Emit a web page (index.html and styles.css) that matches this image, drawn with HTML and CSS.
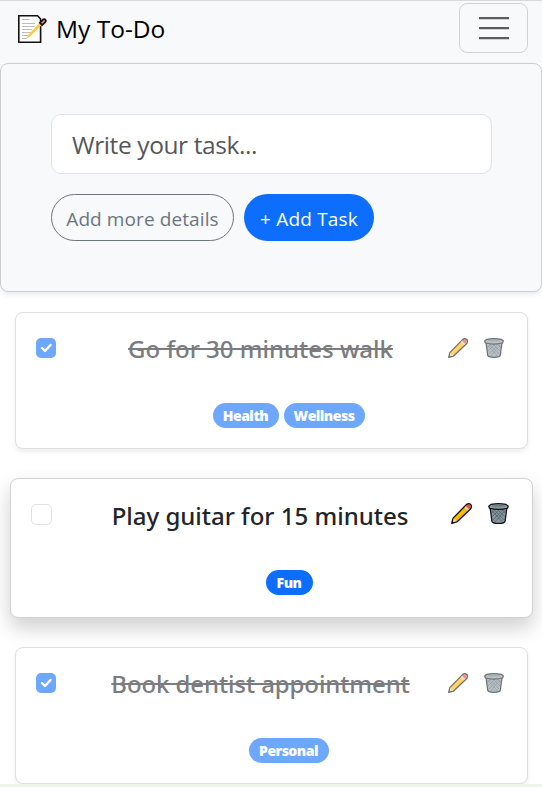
FILE: index.html
```html
<!DOCTYPE html>
<html lang="en">
<head>
<meta charset="utf-8">
<title>My To-Do</title>
<link rel="stylesheet" href="styles.css">
</head>
<body>
<svg class="symbols" width="0" height="0" aria-hidden="true">
  <symbol id="pencil" viewBox="0 0 20 20">
    <path d="M.7 19.3 2 14.4 14.6 1.6Q17 0 18.8 1.5 20.3 3.4 18.5 5.7L5.6 18Z" fill="#ffb900" stroke="#111" stroke-width="1.3" stroke-linejoin="round"/>
    <path d="M1.6 18.4 2.7 14.8 5.2 17.4Z" fill="#e9d3c3"/>
    <path d="m12.8 4.3 3 3 1.4-1.5-3-3Z" fill="#d2d3d8"/>
    <path d="m14.2 2.9 1-1Q17 .9 18.2 2T18 5l-.9.8Z" fill="#f0455d"/>
    <path d="m.7 19.3.6-2.2 1.5 1.5Z" fill="#111"/>
  </symbol>
  <symbol id="bin" viewBox="0 0 20 20">
    <path d="M2 4.500 3.700 17.200Q4 19.400 10 19.400t6.300-2.200L18 4.500Z" fill="#8797a0" stroke="#111" stroke-width="1.200"/>
    <path d="m3.500 7 10 11M5.500 6 15 16M9 6l7 7M13 6l4 4M16.500 7 6.500 18M14.500 6 5 16M11 6l-7 7M7 6l-4 4" fill="none" stroke="#4b5960" stroke-width=".7"/>
    <path d="M2.800 1.300Q10-.1 17.200 1.300L19.300 3 18.600 5Q10 7.200 1.400 5L.7 3Z" fill="#8b9ba2" stroke="#111" stroke-width="1.200" stroke-linejoin="round"/>
    <ellipse cx="10" cy="2.600" rx="6.500" ry="1" fill="#6d7d85"/>
  </symbol>
</svg>
<nav class="navbar">
  <div class="brand">
    <svg class="memo" viewBox="0 0 30 30">
      <path d="M1.800 1.800H20.500L23.600 5V28.200H1.800Z" fill="#fff" stroke="#111" stroke-width="1.600"/>
      <path d="M5 5.500h7.500M5 9.500h13M5 12.500h12.500M5 15.500h10M5 18.500h8.500M5 21.500h7M5 24.500h4.500" stroke="#bcbcbc" stroke-width="1"/>
      <path d="m9.200 24.800 2-4L24.500 7.200l2 2L12.800 22.800Z" fill="#ffc83d"/>
      <path d="m9 25 1.800-4 1.800 1.800Z" fill="#f3c9b5"/>
      <path d="M22.800 8.800 26 5.600Q27.600 4.700 28.500 6T28 8.400L25.200 11Z" fill="#df8b89" stroke="#111" stroke-width="1.700"/>
    </svg>
    <span class="brand-name">My To-Do</span>
  </div>
  <button class="toggler" aria-label="Menu"><svg viewBox="0 0 30 30"><path d="M0 3.200h30M0 13.200h30M0 23.200h30" stroke="#5b5c5d" stroke-width="2.200"/></svg></button>
</nav>
<form class="composer">
  <input class="task-input" placeholder="Write your task...">
  <div class="actions">
    <button type="button" class="btn btn-outline"><span>Add more details</span></button>
    <button type="button" class="btn btn-primary"><span>+ Add Task</span></button>
  </div>
</form>
<main class="tasks">
  <article class="card done">
    <header class="card-head">
      <span class="check checked"><svg viewBox="0 0 20 20"><path d="m6 10 3 3 5.500-6"/></svg></span>
      <h2 class="title">Go for 30 minutes walk</h2>
      <span class="tools"><svg><use href="#pencil"/></svg><svg><use href="#bin"/></svg></span>
    </header>
    <div class="badges"><span class="badge b-health">Health</span><span class="badge b-wellness">Wellness</span></div>
  </article>
  <article class="card raised">
    <header class="card-head">
      <span class="check"></span>
      <h2 class="title">Play guitar for 15 minutes</h2>
      <span class="tools"><svg><use href="#pencil"/></svg><svg><use href="#bin"/></svg></span>
    </header>
    <div class="badges"><span class="badge b-fun">Fun</span></div>
  </article>
  <article class="card done">
    <header class="card-head">
      <span class="check checked"><svg viewBox="0 0 20 20"><path d="m6 10 3 3 5.500-6"/></svg></span>
      <h2 class="title t-dentist">Book dentist appointment</h2>
      <span class="tools"><svg><use href="#pencil"/></svg><svg><use href="#bin"/></svg></span>
    </header>
    <div class="badges"><span class="badge b-personal">Personal</span></div>
  </article>
</main>
<footer class="page-end"></footer>
</body>
</html>
```
FILE: styles.css
```css
* { box-sizing: border-box; }
body {
  margin: 0;
  height: 787px;
  overflow: hidden;
  display: flex;
  flex-direction: column;
  background: #fff;
  color: #212529;
  font-family: "Open Sans", "Noto Sans", sans-serif;
  font-weight: 370;
}
.symbols { display: none; }
button, input { font: inherit; margin: 0; }
.navbar {
  flex: none;
  height: 63px;
  border-top: 1px solid #d9dad8;
  background: #f8f9fb;
  display: flex;
  justify-content: space-between;
  align-items: flex-start;
  padding: 2px 14px 0 17px;
}
.brand { display: flex; align-items: center; gap: 9px; height: 52px; color: #000; }
.memo { width: 30px; height: 30px; }
.brand-name { font-size: 24.5px; letter-spacing: 0; white-space: nowrap; padding-bottom: 2px; }
.toggler {
  width: 69px;
  height: 50px;
  padding: 0;
  border: 1px solid #d0d2d5;
  border-radius: 8px;
  background: none;
  display: flex;
  align-items: center;
  justify-content: center;
}
.toggler svg { width: 30px; height: 30px; margin-top: 3px; }
.composer {
  flex: none;
  height: 229px;
  padding: 50px;
  background: #f8f9fb;
  border: 1px solid #cbcdd0;
  border-radius: 8px;
  box-shadow: 0 3px 5px rgba(0, 0, 0, .075);
}
.task-input {
  display: block;
  width: 441px;
  height: 60px;
  padding: 0 20px;
  border: 1px solid #dee2e6;
  border-radius: 10px;
  background: #fff;
  font-size: 24.5px;
  letter-spacing: -0.4px;
}
.task-input::placeholder { color: #54575a; opacity: 1; }
.actions { display: flex; gap: 10px; margin-top: 20px; }
.btn {
  height: 47px;
  padding: 3px 0 0;
  border-radius: 24px;
  font-size: 19px;
  white-space: nowrap;
}
.btn-outline { width: 183px; border: 1px solid #6c757d; background: none; color: #6c757d; letter-spacing: 0.1px; }
.btn-primary { width: 130px; border: 0; background: #0d6efd; color: #fff; letter-spacing: 0.2px; }
.tasks { flex: none; padding: 20px 14px 0 15px; }
.card {
  height: 137px;
  padding: 20px 23px 0 20px;
  background: #fff;
  border: 1px solid #dfdfdf;
  border-radius: 8px;
  box-shadow: 0 3px 5px rgba(0, 0, 0, .07);
}
.card.raised {
  margin: 29px -5px;
  height: 140px;
  padding: 20px 23px 0 20px;
  border-color: #d0d1d2;
  box-shadow: 0 10px 20px rgba(0, 0, 0, .19);
}
.card-head { display: flex; justify-content: space-between; align-items: center; height: 30px; }
.check { flex: none; width: 20px; height: 20px; border-radius: 5px; border: 1px solid #dee2e6; }
.raised .check { width: 21px; height: 21px; }
.checked { border: 0; background: #6ea8fe; }
.checked svg { display: block; fill: none; stroke: #fff; stroke-width: 2.4; stroke-linecap: round; stroke-linejoin: round; }
.title {
  flex: 1;
  margin: 0;
  padding: 2px 0 0 17px;
  font: 460 24px/32px "Noto Sans", "Open Sans", sans-serif;
  text-align: center;
  white-space: nowrap;
}
.t-dentist { letter-spacing: -0.1px; }
.raised .title { padding-top: 3px; }
.done .title { color: #7a7c7f; text-decoration: line-through 2px; }
.tools { display: flex; gap: 16px; }
.tools svg { width: 20px; height: 20px; }
.raised .tools svg { width: 21px; height: 21px; margin-top: -1px; }
.done .tools { opacity: .6; }
.badges { display: flex; justify-content: center; gap: 5px; margin: 40px 0 0 37px; }
.raised .badges { margin: 41px 0 0 38px; }
.badge {
  height: 25px;
  border-radius: 13px;
  background: #0d6efd;
  color: #fff;
  font-weight: 800;
  font-size: 14px;
  line-height: 25px;
  letter-spacing: -0.5px;
  text-align: center;
}
.done .badge { background: #6ea8fe; }
.b-health { width: 66px; }
.b-wellness { width: 81px; }
.b-fun { width: 47px; }
.b-personal { width: 80px; }
.page-end { flex: none; height: 3px; background: #edf5eb; }
```
